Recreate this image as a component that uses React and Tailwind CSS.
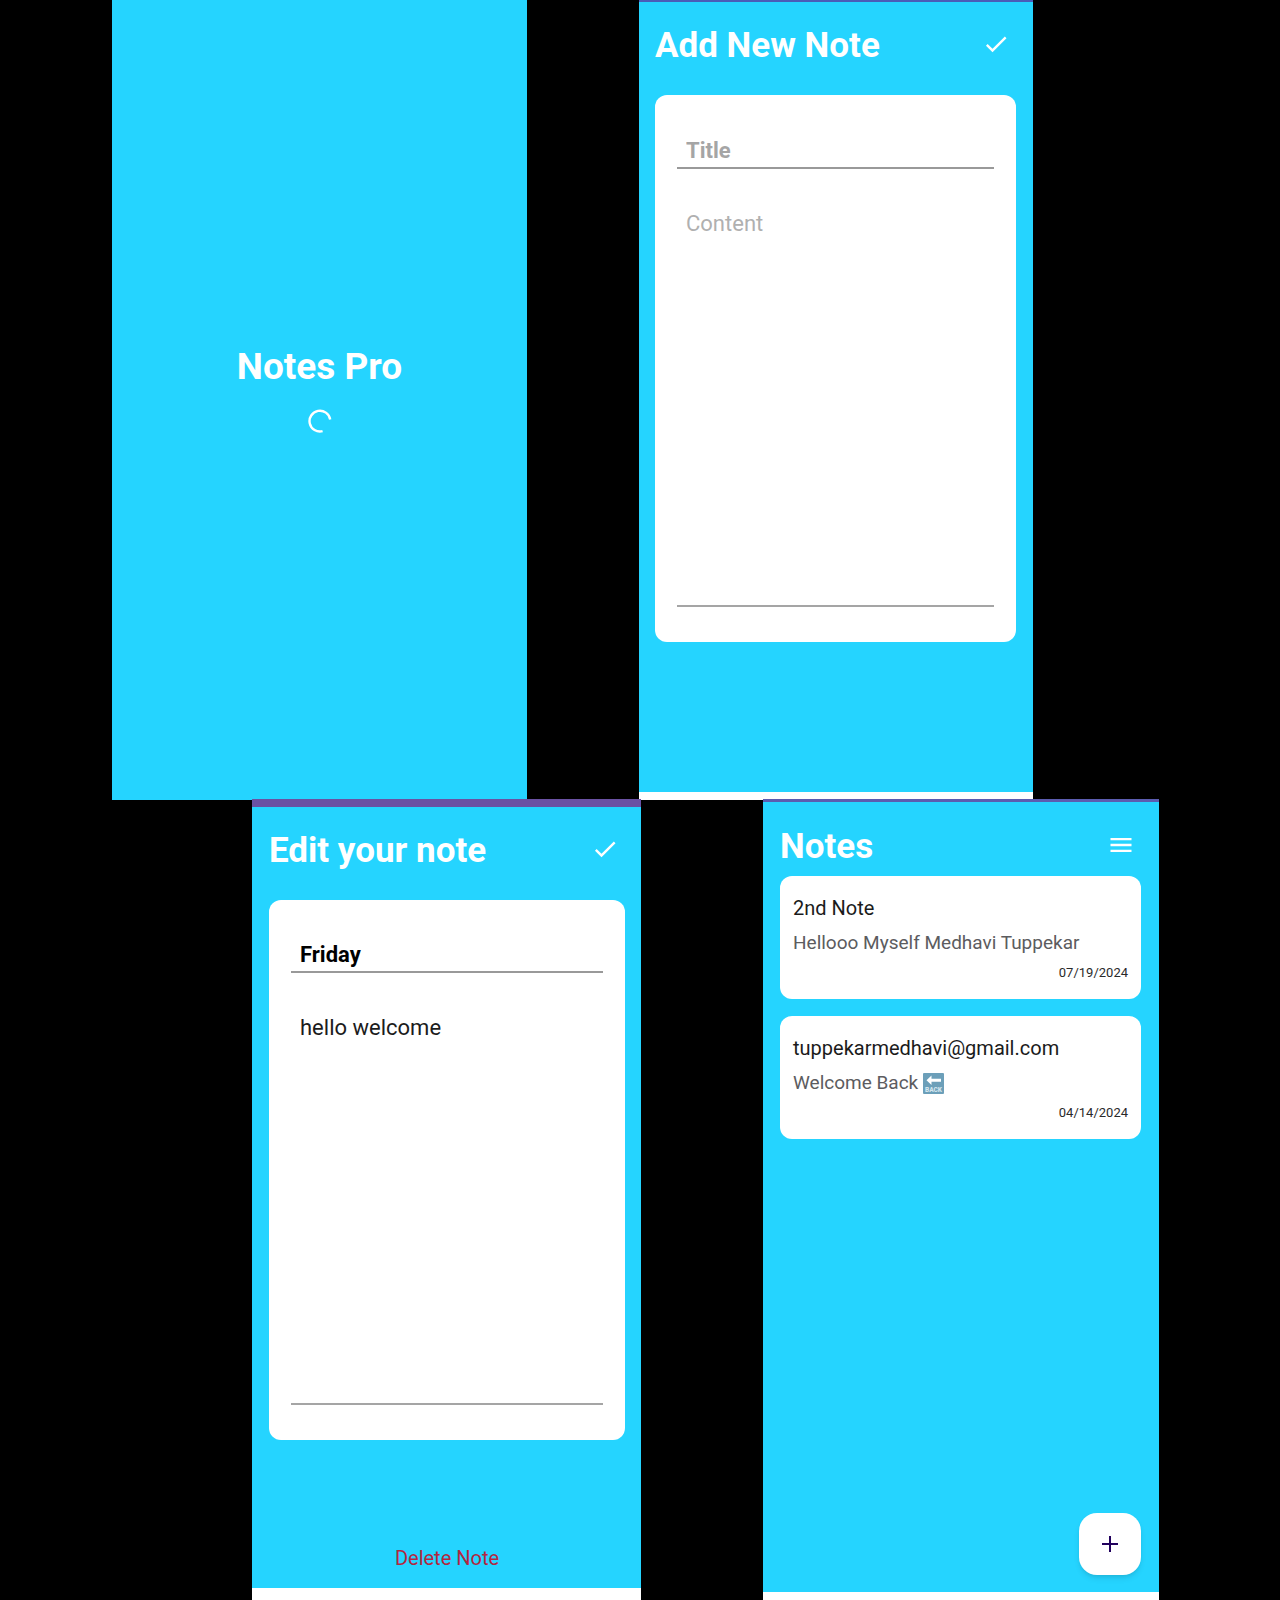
import React from "react";

const notes = [
  { title: "2nd Note", content: "Hellooo Myself Medhavi Tuppekar", date: "07/19/2024" },
  { title: "tuppekarmedhavi@gmail.com", content: "Welcome Back", back: true, date: "04/14/2024" },
];

function CheckIcon() {
  return (
    <svg viewBox="0 0 24 24" className="size-7" fill="white" aria-hidden="true">
      <path d="M9 16.17 4.83 12l-1.42 1.41L9 19 21 7l-1.41-1.41z" />
    </svg>
  );
}

function MenuIcon() {
  return (
    <svg viewBox="0 0 24 24" className="size-7" fill="white" aria-hidden="true">
      <path d="M3 18h18v-2H3v2zm0-5h18v-2H3v2zm0-7v2h18V6H3z" />
    </svg>
  );
}

function BackEmoji() {
  return (
    <svg viewBox="0 0 21 21" className="size-[21px]" role="img" aria-label="Back">
      <rect width="21" height="21" rx="1" fill="#6c9fb9" />
      <path d="M3.5 7.2 8.5 2.5v3.2H18v3H8.5v3.2z" fill="white" />
      <text x="10.5" y="19" textAnchor="middle" fontSize="6.5" fontWeight="900" fill="#d3e5ee">
        BACK
      </text>
    </svg>
  );
}

function Splash() {
  return (
    <section className="col-start-2 flex flex-col items-center bg-[#25d4ff] pt-[345px]">
      <h1 className="text-[37px] leading-11 font-bold text-white">Notes Pro</h1>
      <svg viewBox="0 0 24 24" className="mt-5 size-6" fill="none" role="img" aria-label="Loading">
        <path d="M22.2 10.5A10.4 10.4 0 1 0 14.6 22.2" stroke="white" strokeWidth="2.4" />
      </svg>
    </section>
  );
}

function Editor({ heading, title, content, cardClass }) {
  return (
    <>
      <header className="flex items-center justify-between pr-[6px]">
        <h2 className="text-[35px] leading-11 font-bold text-white">{heading}</h2>
        <button type="button" aria-label="Save note" className="pb-1">
          <CheckIcon />
        </button>
      </header>
      <form className={`mt-[27px] flex flex-col rounded-xl bg-white px-[22px] pb-[35px] ${cardClass}`}>
        <input
          type="text"
          aria-label="Title"
          placeholder="Title"
          defaultValue={title}
          className="h-9 w-full border-b-2 border-[#999] px-[9px] text-[22px] leading-7 font-bold text-black outline-none placeholder:text-[#a5a5a5]"
        />
        <textarea
          aria-label="Content"
          placeholder="Content"
          defaultValue={content}
          className="mt-8 w-full flex-1 resize-none border-b-2 border-[#a5a5a5] px-[9px] pt-[9px] text-[22px] leading-7 text-[#1c1c1c] outline-none placeholder:text-[#b0b0b0]"
        />
      </form>
    </>
  );
}

function AddNote() {
  return (
    <section className="col-start-4 flex flex-col border-t-2 border-b-8 border-t-[#4a5cb8] border-b-white bg-[#25d4ff] pt-[22px] pr-[17px] pl-4">
      <Editor heading="Add New Note" cardClass="h-[547px] pt-[38px]" />
    </section>
  );
}

function EditNote() {
  return (
    <section className="col-start-2 flex flex-col border-t-8 border-b-12 border-t-[#6a51a3] border-b-white bg-[#25d4ff] pt-[22px] pr-4 pl-[17px]">
      <Editor heading="Edit your note" title="Friday" content="hello welcome" cardClass="h-[540px] pt-[37px]" />
      <button type="button" className="mt-auto mb-4 self-center text-[20px] leading-7 text-[#b3263e]">
        Delete Note
      </button>
    </section>
  );
}

function NoteCard({ note }) {
  return (
    <li className="flex flex-col rounded-xl bg-white px-[13px] pt-[18px] pb-4">
      <h3 className="text-[20px] leading-7 text-[#1b1b1b]">{note.title}</h3>
      <p className="mt-[7px] flex items-center gap-[5px] text-[19px] leading-7 text-[#5c5c60]">
        {note.content}
        {note.back && <BackEmoji />}
      </p>
      <time className="mt-[6px] self-end text-[13px] leading-5 text-[#2a2a2a]">{note.date}</time>
    </li>
  );
}

function NoteList() {
  return (
    <section className="relative col-start-4 flex flex-col border-t-3 border-b-8 border-t-[#5b5cb0] border-b-white bg-[#25d4ff] pt-[23px] pr-[18px] pl-[17px]">
      <header className="flex items-center justify-between pr-[6px]">
        <h2 className="text-[35px] leading-11 font-bold text-white">Notes</h2>
        <button type="button" aria-label="Menu" className="pb-1">
          <MenuIcon />
        </button>
      </header>
      <ul className="mt-[7px] flex flex-col gap-[17px]">
        {notes.map((note) => (
          <NoteCard key={note.date} note={note} />
        ))}
      </ul>
      <button
        type="button"
        aria-label="Add note"
        className="absolute right-[18px] bottom-[17px] flex size-[62px] items-center justify-center rounded-[18px] bg-white shadow-md"
      >
        <svg viewBox="0 0 16 16" className="size-4" fill="none" stroke="#21005d" strokeWidth="2" aria-hidden="true">
          <path d="M8 0v16M0 8h16" />
        </svg>
      </button>
    </section>
  );
}

export default function App() {
  return (
    <main className="grid min-h-screen grid-rows-[799fr_801fr] bg-black font-[Roboto,sans-serif]">
      <div className="-mb-px grid grid-cols-[112fr_415fr_112fr_394fr_247fr]">
        <Splash />
        <AddNote />
      </div>
      <div className="grid grid-cols-[252fr_389fr_122fr_396fr_121fr]">
        <EditNote />
        <NoteList />
      </div>
    </main>
  );
}
